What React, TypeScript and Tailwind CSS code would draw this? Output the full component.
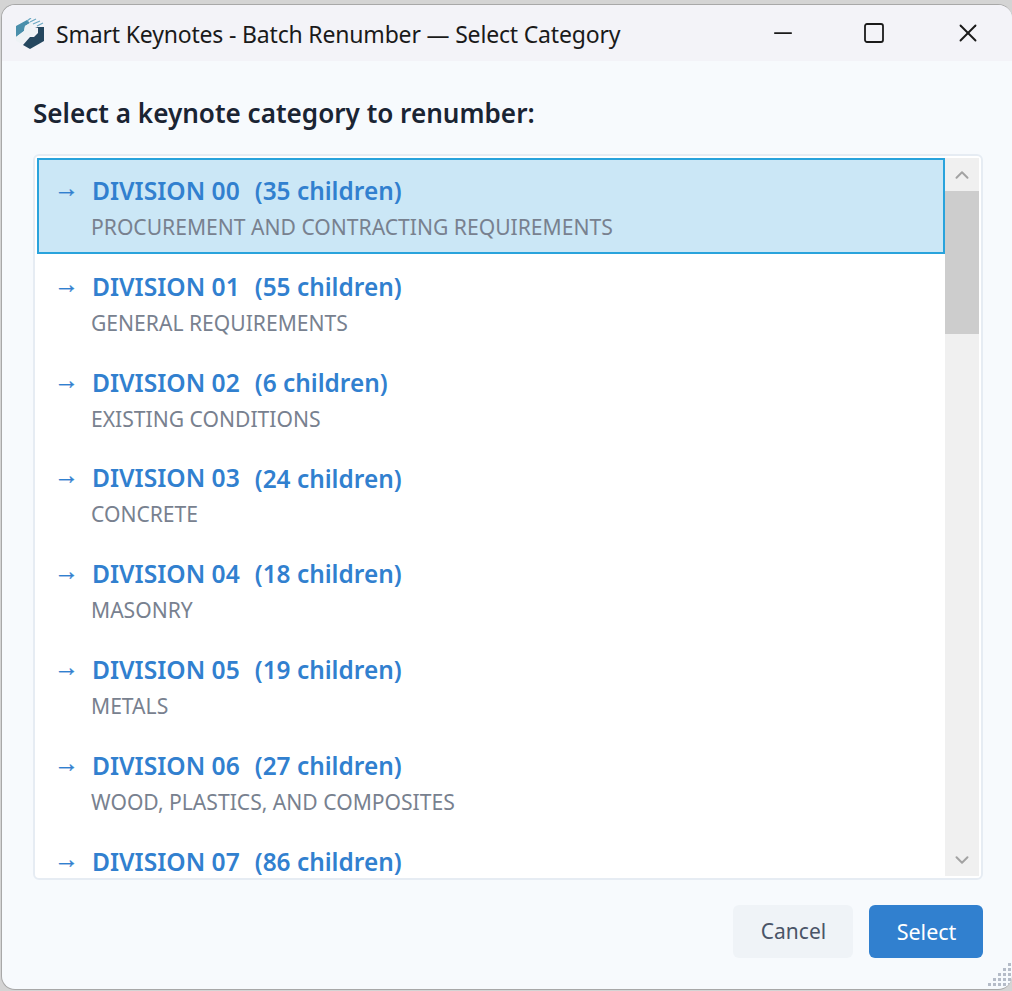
import { ChevronDown, ChevronUp, Minus, Square, X } from "lucide-react";

const categories = [
  { code: "DIVISION 00", count: 35, name: "PROCUREMENT AND CONTRACTING REQUIREMENTS" },
  { code: "DIVISION 01", count: 55, name: "GENERAL REQUIREMENTS" },
  { code: "DIVISION 02", count: 6, name: "EXISTING CONDITIONS" },
  { code: "DIVISION 03", count: 24, name: "CONCRETE" },
  { code: "DIVISION 04", count: 18, name: "MASONRY" },
  { code: "DIVISION 05", count: 19, name: "METALS" },
  { code: "DIVISION 06", count: 27, name: "WOOD, PLASTICS, AND COMPOSITES" },
  { code: "DIVISION 07", count: 86, name: "THERMAL AND MOISTURE PROTECTION" },
];

const gripDots = [
  [20, 0],
  [15, 5],
  [20, 5],
  [10, 10],
  [15, 10],
  [20, 10],
  [5, 15],
  [10, 15],
  [15, 15],
  [20, 15],
  [0, 20],
  [5, 20],
  [10, 20],
  [15, 20],
  [20, 20],
];

function AppLogo() {
  return (
    <svg width="28" height="31" viewBox="0 0 28 31" className="shrink-0">
      <path d="M0 8 11 2l3 3-5 3-1 5-8 6z" fill="#4a8fab" />
      <path d="M19 9h9v14L14 31l-7-4 7-8h4l4-4v-5z" fill="#25475f" />
      <path d="M0 19l8-6 1-5 5-3h4l-3 4 2 3 4-2v4l-4 4h-4l-7 8-6-3z" fill="#eef2f5" />
      <path d="M11 3l4-3M14 4l6-3M17 6l7-3M21 8l6-3" stroke="#6fabc4" strokeWidth="1.3" fill="none" />
    </svg>
  );
}

function ScrollBar() {
  return (
    <div className="flex w-[34px] shrink-0 flex-col bg-[#f0f0f0]">
      <div className="flex h-[33px] items-center justify-center text-[#a3a3a3]">
        <ChevronUp size={22} strokeWidth={2.2} />
      </div>
      <div className="h-[143px] bg-[#cdcdcd]" />
      <div className="flex-1" />
      <div className="flex h-[33px] items-center justify-center text-[#a3a3a3]">
        <ChevronDown size={22} strokeWidth={2.2} />
      </div>
    </div>
  );
}

export default function App() {
  return (
    <div className="h-[991px] w-[1012px] overflow-hidden bg-[#d4d4d4] pt-1 pl-px font-['Noto_Sans',sans-serif]">
      <div className="relative flex h-[986px] w-[1011px] flex-col overflow-hidden rounded-t-[14px] rounded-b-[14px] border-t border-b border-l border-[#a8a8a8] bg-[#f7fafd]">
        <div className="flex h-[56px] shrink-0 items-center bg-[#f3f3f8] pl-[14px]">
          <AppLogo />
          <span className="mt-[2px] ml-[12px] text-[23px] tracking-[-0.18px] text-[#1a1a1a]">
            Smart Keynotes - Batch Renumber — Select Category
          </span>
          <div className="ml-auto flex items-center text-[#1a1a1a]">
            <Minus size={28} strokeWidth={1.5} className="mr-[65px]" />
            <Square size={24} strokeWidth={1.8} className="mr-[67px]" />
            <X size={30} strokeWidth={1.5} className="mr-[29px]" />
          </div>
        </div>

        <div className="flex min-h-0 flex-1 flex-col pt-[34px] pr-[29px] pb-[31px] pl-[31px]">
          <h1 className="text-[26.1px] leading-[36px] font-semibold text-[#1a2433]">
            Select a keynote category to renumber:
          </h1>

          <div className="mt-[23px] flex h-[726px] overflow-hidden rounded-md border-2 border-[#e6ecf3] bg-white p-[2px]">
            <div className="min-w-0 flex-1 overflow-hidden">
              {categories.map((c, i) => (
                <div
                  key={c.code}
                  className={
                    i === 0
                      ? "h-[95.8px] border-2 border-[#29a3dc] bg-[#cbe7f6] pt-[12.5px] pl-[17px]"
                      : "h-[95.8px] border-2 border-transparent pt-[12.5px] pl-[17px]"
                  }
                >
                  <div className="flex h-[38px] items-center text-[24.6px] font-semibold whitespace-pre text-[#3180cf]">
                    <span className="-ml-[2px] w-[38px] pb-[6px] font-['Liberation_Sans',sans-serif] text-[25px] leading-none font-normal [-webkit-text-stroke:0.4px_#3180cf]">
                      →
                    </span>
                    {c.code}
                    <span className="ml-[15px] text-[24.4px]">
                      ({c.count} children)
                    </span>
                  </div>
                  <div className="mt-[0.5px] pl-[35px] text-[21.1px] leading-[32px] text-[#78818f]">{c.name}</div>
                </div>
              ))}
            </div>
            <ScrollBar />
          </div>

          <div className="mt-auto flex justify-end gap-4">
            <button className="h-[53px] w-[120px] rounded-md bg-[#eff3f7] pt-px pl-px text-[21px] text-[#4a5568]">Cancel</button>
            <button className="h-[53px] w-[114px] rounded-md bg-[#3180cf] pt-px pl-px text-[21.5px] text-white">Select</button>
          </div>
        </div>

        {/* resize grip */}
        <svg width="24" height="24" viewBox="0 0 24 24" className="absolute right-0 bottom-[2px] text-[#b5bcc8]">
          {gripDots.map(([x, y]) => (
            <rect key={`${x}-${y}`} x={x} y={y} width="3" height="3" fill="currentColor" />
          ))}
        </svg>
      </div>
    </div>
  );
}
